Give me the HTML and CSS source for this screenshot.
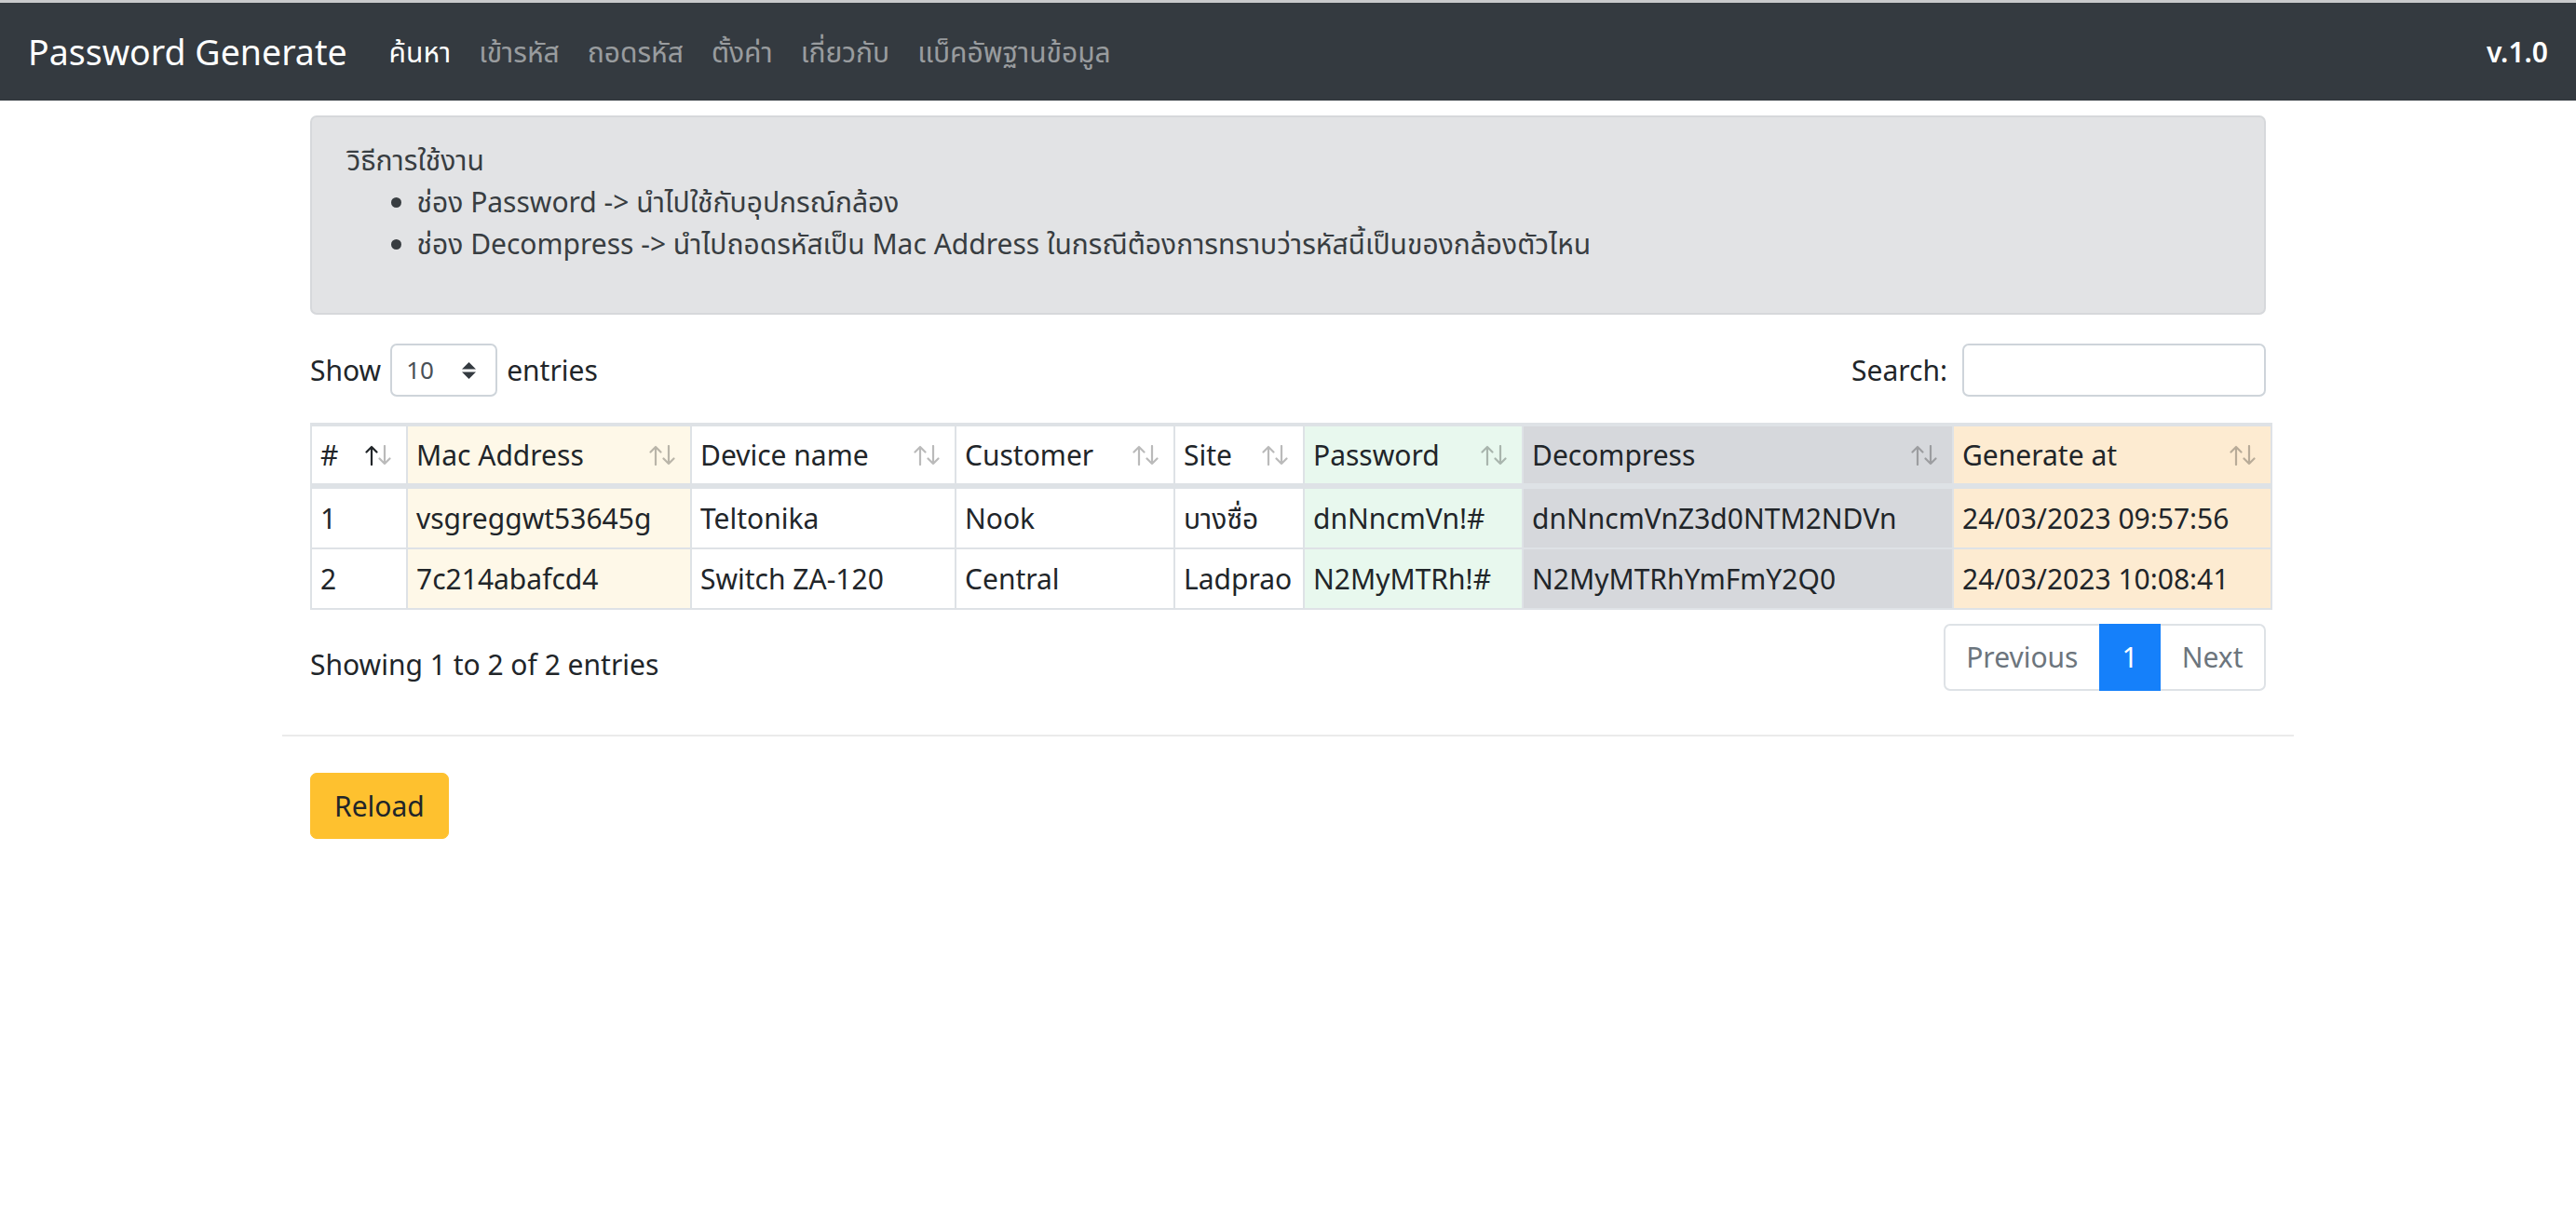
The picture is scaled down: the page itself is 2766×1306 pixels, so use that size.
FILE: index.html
```html
<!DOCTYPE html>
<html lang="th">
<head>
<meta charset="utf-8">
<title>Password Generate</title>
<link rel="stylesheet" href="styles.css">
</head>
<body>
<nav class="navbar">
  <div class="nav-left">
    <span class="brand">Password Generate</span>
    <ul class="nav-links">
      <li class="nav-link active">ค้นหา</li>
      <li class="nav-link">เข้ารหัส</li>
      <li class="nav-link">ถอดรหัส</li>
      <li class="nav-link">ตั้งค่า</li>
      <li class="nav-link">เกี่ยวกับ</li>
      <li class="nav-link">แบ็คอัพฐานข้อมูล</li>
    </ul>
  </div>
  <span class="version">v.1.0</span>
</nav>

<div class="page">
  <div class="content">
    <div class="alert">
      วิธีการใช้งาน
      <ul class="howto">
        <li>ช่อง Password -&gt; นำไปใช้กับอุปกรณ์กล้อง</li>
        <li>ช่อง Decompress -&gt; นำไปถอดรหัสเป็น Mac Address ในกรณีต้องการทราบว่ารหัสนี้เป็นของกล้องตัวไหน</li>
      </ul>
    </div>

    <div class="dt-top">
      <div class="dt-length">
        <span>Show</span>
        <div class="select">
          <span>10</span>
          <svg class="caret" width="17" height="20" viewBox="0 0 17 20"><path d="M1 8.5 L8.5 1 L16 8.5 Z" fill="#343a40"/><path d="M1 11.5 L8.5 19 L16 11.5 Z" fill="#343a40"/></svg>
        </div>
        <span>entries</span>
      </div>
      <div class="dt-search">
        <span>Search:</span>
        <div class="input"></div>
      </div>
    </div>

    <table class="dt-table">
      <thead>
        <tr>
          <th class="w-idx"><div class="th-in"><span>#</span><svg class="sort" width="30" height="22" viewBox="0 0 30 22"><g fill="none" stroke-width="2.2" stroke-linecap="round" stroke-linejoin="round"><path class="on" d="M7 21 V2 M1.5 7.5 L7 2 L12.5 7.5"/><path class="off" d="M21 1 V20 M15.5 14.5 L21 20 L26.5 14.5"/></g></svg></div></th>
          <th class="w-mac c-mac"><div class="th-in"><span>Mac Address</span><svg class="sort" width="30" height="22" viewBox="0 0 30 22"><g fill="none" stroke-width="2.2" stroke-linecap="round" stroke-linejoin="round"><path class="off" d="M7 21 V2 M1.5 7.5 L7 2 L12.5 7.5"/><path class="off" d="M21 1 V20 M15.5 14.5 L21 20 L26.5 14.5"/></g></svg></div></th>
          <th class="w-dev"><div class="th-in"><span>Device name</span><svg class="sort" width="30" height="22" viewBox="0 0 30 22"><g fill="none" stroke-width="2.2" stroke-linecap="round" stroke-linejoin="round"><path class="off" d="M7 21 V2 M1.5 7.5 L7 2 L12.5 7.5"/><path class="off" d="M21 1 V20 M15.5 14.5 L21 20 L26.5 14.5"/></g></svg></div></th>
          <th class="w-cus"><div class="th-in"><span>Customer</span><svg class="sort" width="30" height="22" viewBox="0 0 30 22"><g fill="none" stroke-width="2.2" stroke-linecap="round" stroke-linejoin="round"><path class="off" d="M7 21 V2 M1.5 7.5 L7 2 L12.5 7.5"/><path class="off" d="M21 1 V20 M15.5 14.5 L21 20 L26.5 14.5"/></g></svg></div></th>
          <th class="w-site"><div class="th-in"><span>Site</span><svg class="sort" width="30" height="22" viewBox="0 0 30 22"><g fill="none" stroke-width="2.2" stroke-linecap="round" stroke-linejoin="round"><path class="off" d="M7 21 V2 M1.5 7.5 L7 2 L12.5 7.5"/><path class="off" d="M21 1 V20 M15.5 14.5 L21 20 L26.5 14.5"/></g></svg></div></th>
          <th class="w-pass c-pass"><div class="th-in"><span>Password</span><svg class="sort" width="30" height="22" viewBox="0 0 30 22"><g fill="none" stroke-width="2.2" stroke-linecap="round" stroke-linejoin="round"><path class="off" d="M7 21 V2 M1.5 7.5 L7 2 L12.5 7.5"/><path class="off" d="M21 1 V20 M15.5 14.5 L21 20 L26.5 14.5"/></g></svg></div></th>
          <th class="w-dec c-dec"><div class="th-in"><span>Decompress</span><svg class="sort" width="30" height="22" viewBox="0 0 30 22"><g fill="none" stroke-width="2.2" stroke-linecap="round" stroke-linejoin="round"><path class="off" d="M7 21 V2 M1.5 7.5 L7 2 L12.5 7.5"/><path class="off" d="M21 1 V20 M15.5 14.5 L21 20 L26.5 14.5"/></g></svg></div></th>
          <th class="w-gen c-gen"><div class="th-in"><span>Generate at</span><svg class="sort" width="30" height="22" viewBox="0 0 30 22"><g fill="none" stroke-width="2.2" stroke-linecap="round" stroke-linejoin="round"><path class="off" d="M7 21 V2 M1.5 7.5 L7 2 L12.5 7.5"/><path class="off" d="M21 1 V20 M15.5 14.5 L21 20 L26.5 14.5"/></g></svg></div></th>
        </tr>
      </thead>
      <tbody>
        <tr>
          <td>1</td>
          <td class="c-mac">vsgreggwt53645g</td>
          <td>Teltonika</td>
          <td>Nook</td>
          <td>บางซื่อ</td>
          <td class="c-pass">dnNncmVn!#</td>
          <td class="c-dec">dnNncmVnZ3d0NTM2NDVn</td>
          <td class="c-gen">24/03/2023 09:57:56</td>
        </tr>
        <tr>
          <td>2</td>
          <td class="c-mac">7c214abafcd4</td>
          <td>Switch ZA-120</td>
          <td>Central</td>
          <td>Ladprao</td>
          <td class="c-pass">N2MyMTRh!#</td>
          <td class="c-dec">N2MyMTRhYmFmY2Q0</td>
          <td class="c-gen">24/03/2023 10:08:41</td>
        </tr>
      </tbody>
    </table>

    <div class="dt-bottom">
      <div class="dt-info">Showing 1 to 2 of 2 entries</div>
      <ul class="pagination">
        <li class="page-item disabled first">Previous</li>
        <li class="page-item active">1</li>
        <li class="page-item disabled last">Next</li>
      </ul>
    </div>
  </div>

  <hr class="divider">

  <div class="content">
    <button class="btn-reload" type="button">Reload</button>
  </div>
</div>
</body>
</html>
```

FILE: styles.css
```css
html, body {
  margin: 0;
  padding: 0;
}

body {
  font-family: "Noto Sans", "Noto Sans Thai", "Noto Sans Thai UI", "DejaVu Sans", sans-serif;
  font-size: 30px;
  line-height: 45px;
  color: #212529;
  background: #ffffff;
}

/* ---------- navbar ---------- */
.navbar {
  display: flex;
  align-items: center;
  justify-content: space-between;
  height: 105px;
  border-top: 3px solid #c9cacc;
  background: #343a40;
  padding: 0 30px;
}

.nav-left {
  display: flex;
  align-items: center;
}

.brand {
  font-size: 37.5px;
  line-height: 56px;
  color: #ffffff;
  margin-right: 30px;
  white-space: nowrap;
}

.nav-links {
  display: flex;
  list-style: none;
  margin: 0;
  padding: 0;
}

.nav-link {
  padding: 0 15px;
  color: rgba(255, 255, 255, 0.5);
  white-space: nowrap;
}

.nav-link.active {
  color: #ffffff;
}

.version {
  color: #ffffff;
  font-weight: 600;
}

/* ---------- page ---------- */
.page {
  width: 2160px;
  margin: 0 auto;
}

.content {
  padding: 0 30px;
}

.alert {
  margin-top: 16px;
  padding: 22.5px 37.5px;
  background: #e2e3e5;
  border: 2px solid #d6d8db;
  border-radius: 7px;
  color: #383d41;
}

.howto {
  margin: 0 0 30px;
  padding-left: 75px;
}

/* ---------- datatable controls ---------- */
.dt-top {
  display: flex;
  justify-content: space-between;
  align-items: center;
  margin-top: 31px;
  margin-bottom: 28px;
}

.dt-length,
.dt-search {
  display: flex;
  align-items: center;
}

.dt-length {
  gap: 10px;
}

.dt-search {
  gap: 16px;
}

.select {
  box-sizing: border-box;
  width: 115px;
  height: 57px;
  border: 2px solid #ced4da;
  border-radius: 7px;
  display: flex;
  align-items: center;
  justify-content: space-between;
  padding: 0 20px 0 15px;
  font-size: 26px;
  color: #495057;
}

.input {
  box-sizing: border-box;
  width: 326px;
  height: 57px;
  border: 2px solid #ced4da;
  border-radius: 7px;
  background: #ffffff;
}

/* ---------- table ---------- */
.dt-table {
  width: 2105px;
  border-collapse: collapse;
  table-layout: fixed;
}

.dt-table th,
.dt-table td {
  box-sizing: border-box;
  border: 2px solid #dee2e6;
  padding: 9px 9px;
  text-align: left;
  font-weight: 400;
  white-space: nowrap;
  overflow: hidden;
}

.dt-table thead th {
  border-top-width: 4px;
  border-bottom-width: 6px;
  padding: 8px 14px 8px 9px;
}

.th-in {
  display: flex;
  align-items: center;
  justify-content: space-between;
}

.sort {
  flex: none;
}

.sort .on {
  stroke: #212529;
}

.sort .off {
  stroke: rgba(0, 0, 0, 0.27);
}

.w-idx { width: 103px; }
.w-mac { width: 305px; }
.w-dev { width: 284px; }
.w-cus { width: 235px; }
.w-site { width: 139px; }
.w-pass { width: 235px; }
.w-dec { width: 462px; }
.w-gen { width: 342px; }

.c-mac { background: #fef8e8; }
.c-pass { background: #e8f8ee; }
.c-dec { background: #d6d8dc; }
.c-gen { background: #fdebd1; }

/* ---------- bottom ---------- */
.dt-bottom {
  display: flex;
  justify-content: space-between;
  align-items: flex-start;
  margin-top: 15px;
}

.dt-info {
  padding-top: 21px;
}

.pagination {
  display: flex;
  list-style: none;
  margin: 0;
  padding: 0;
}

.page-item {
  padding: 15px 22.5px;
  line-height: 37.5px;
  border: 2px solid #dee2e6;
  margin-left: -2px;
  background: #ffffff;
}

.page-item.disabled {
  color: #6c757d;
}

.page-item.first {
  margin-left: 0;
  border-radius: 7px 0 0 7px;
}

.page-item.last {
  border-radius: 0 7px 7px 0;
}

.page-item.active {
  background: #1580fa;
  border-color: #1580fa;
  color: #ffffff;
  position: relative;
}

.divider {
  margin: 47px 0 39px;
  border: 0;
  border-top: 2px solid #ebebeb;
  height: 0;
}

.btn-reload {
  font-family: inherit;
  font-size: 30px;
  line-height: 45px;
  color: #212529;
  background: #fec12f;
  border: 1px solid #fec12f;
  border-radius: 7px;
  padding: 12px 25px;
  cursor: pointer;
}
```
